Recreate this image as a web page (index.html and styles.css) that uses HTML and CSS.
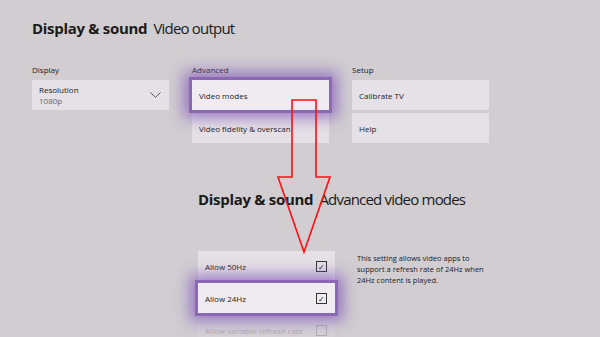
FILE: index.html
```html
<!DOCTYPE html>
<html lang="en">

<head>
    <meta charset="UTF-8">
    <meta name="viewport" content="width=device-width, initial-scale=1.0">
    <title>Display & sound</title>
    <link rel="stylesheet" href="styles.css">
</head>

<body>
    <div class="screen">
        <!-- Video output page -->
        <h1 class="title"><b>Display &amp; sound</b> Video output</h1>

        <div class="columns">
            <div class="group">
                <div class="label">Display</div>
                <div class="tile select">
                    <div>
                        <div>Resolution</div>
                        <div class="sub">1080p</div>
                    </div>
                    <svg class="chevron" width="11" height="6" viewBox="0 0 11 6">
                        <path d="M0.5 0.5 L5.5 5.3 L10.5 0.5" fill="none" stroke="#444" stroke-width="0.9" />
                    </svg>
                </div>
            </div>
            <div class="group">
                <div class="label">Advanced</div>
                <div class="tile focus">Video modes</div>
                <div class="tile">Video fidelity &amp; overscan</div>
            </div>
            <div class="group">
                <div class="label">Setup</div>
                <div class="tile">Calibrate TV</div>
                <div class="tile">Help</div>
            </div>
        </div>

        <!-- Advanced video modes page -->
        <div class="advanced">
            <h1 class="title"><b>Display &amp; sound</b> Advanced video modes</h1>
            <div class="settings">
                <div class="options">
                    <div class="tile check-row">Allow 50Hz<span class="box">&#10003;</span></div>
                    <div class="tile check-row focus">Allow 24Hz<span class="box">&#10003;</span></div>
                    <div class="tile check-row faded">Allow variable refresh rate<span class="box"></span></div>
                </div>
                <p class="help">This setting allows video apps to support a refresh rate of 24Hz when 24Hz content is played.</p>
            </div>
        </div>

        <!-- red arrow drawn over the screenshot -->
        <svg class="arrow" width="600" height="337" viewBox="0 0 600 337">
            <path d="M292 100 L316 100 L316 177 L330 177 L304 252 L278 177 L292 177 Z" fill="none" stroke="#ff1010" stroke-width="1.6" />
        </svg>
    </div>
</body>

</html>
```

FILE: styles.css
```css
* {
    margin: 0;
    padding: 0;
    box-sizing: border-box;
}

body {
    font-family: "Open Sans", "Noto Sans", sans-serif;
    background: #d1cdd1;
    color: #1b1b1b;
    width: 600px;
    height: 337px;
    overflow: hidden;
}

.screen {
    position: relative;
    width: 600px;
    height: 337px;
    padding: 18px 0 0 32px;
}

.title {
    font-size: 15px;
    font-weight: normal;
    letter-spacing: -0.8px;
    line-height: 20px;
    color: #1b1b1b;
}

.title b {
    font-weight: bold;
    letter-spacing: -0.3px;
    margin-right: 3px;
}

.columns {
    display: flex;
    gap: 23px;
    margin-top: 26px;
}

.group {
    width: 137px;
    display: flex;
    flex-direction: column;
    gap: 3px;
}

.label {
    font-size: 8px;
    height: 11px;
    line-height: 11px;
    margin-bottom: 2px;
}

.tile {
    background: #e5e1e6;
    height: 30px;
    font-size: 8px;
    padding: 0 7px;
    display: flex;
    align-items: center;
}

.select {
    justify-content: space-between;
    padding-right: 8px;
    line-height: 11px;
}

.sub {
    color: #666;
}

.focus {
    background: #efebf1;
    outline: 3px solid #8a68b4;
    box-shadow: 0 0 14px 8px rgba(130, 88, 185, 0.75);
    position: relative;
    z-index: 1;
}

.advanced {
    margin: 46px 0 0 166px;
}

.settings {
    display: flex;
    gap: 22px;
    margin-top: 42px;
}

.options {
    width: 137px;
    display: flex;
    flex-direction: column;
    gap: 2px;
}

.check-row {
    justify-content: space-between;
    padding-right: 8px;
}

.box {
    width: 11px;
    height: 11px;
    border: 1px solid #333;
    font-size: 8px;
    line-height: 9px;
    text-align: center;
    color: #222;
}

.faded {
    opacity: 0.2;
}

.help {
    width: 140px;
    font-size: 7.5px;
    line-height: 11px;
    margin-top: 2px;
}

.arrow {
    position: absolute;
    left: 0;
    top: 0;
    z-index: 2;
}
```
